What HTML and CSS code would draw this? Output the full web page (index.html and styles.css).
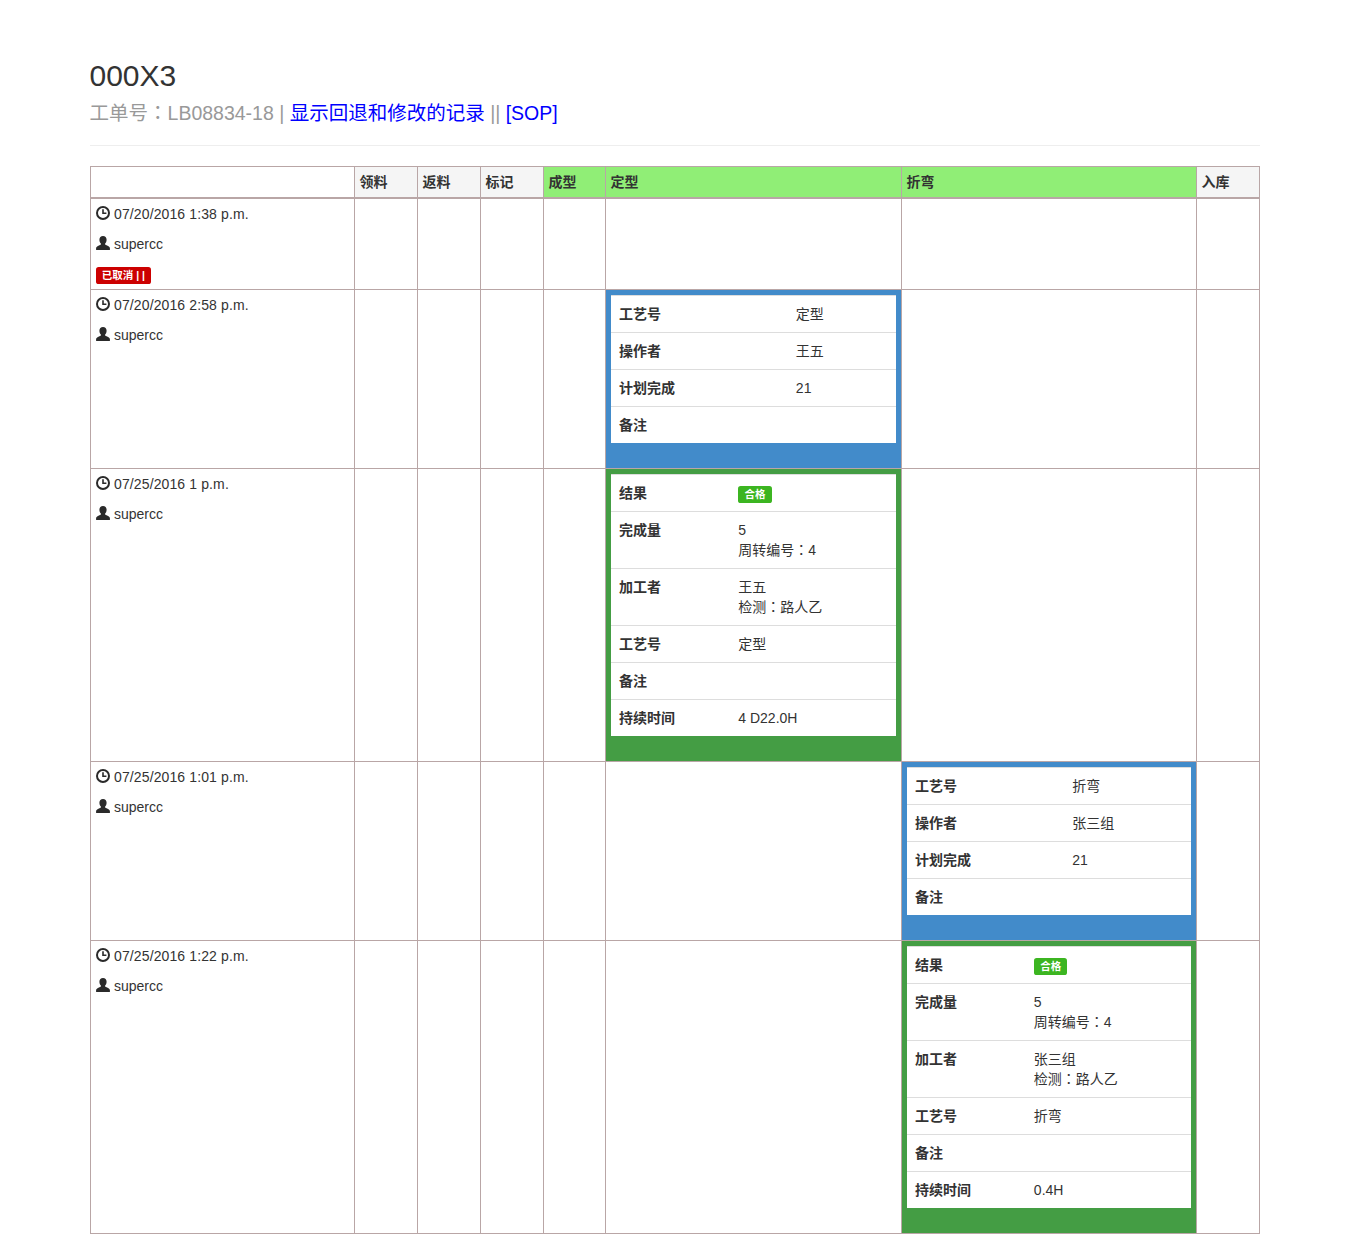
FILE: index.html
```html
<!DOCTYPE html>
<html lang="zh">
<head>
<meta charset="utf-8">
<title>000X3</title>
<link rel="stylesheet" href="styles.css">
</head>
<body>
<svg class="sprite" width="0" height="0" aria-hidden="true">
  <symbol id="clock" viewBox="0 0 14 14">
    <path fill-rule="evenodd" d="M7 0a7 7 0 1 1 0 14A7 7 0 0 1 7 0zm0 2a5 5 0 1 0 0 10A5 5 0 0 0 7 2z"/>
    <path d="M6.2 3.2h1.6v3.2h2.6v1.6H6.2z"/>
  </symbol>
  <symbol id="user" viewBox="0 0 14 14">
    <path d="M7 0c2.2 0 3.6 1.4 3.6 3.7 0 1.5-.6 3-1.4 3.8-.3.4-.2 1 .3 1.2l2.6 1.2c1 .5 1.7 1.2 1.8 2.1V14H.1v-1.9c.1-.9.8-1.6 1.8-2.1l2.6-1.2c.5-.2.6-.8.3-1.2-.8-.8-1.4-2.3-1.4-3.8C3.4 1.4 4.8 0 7 0z"/>
  </symbol>
</svg>
<main class="page">
  <div class="page-header">
    <h2>000X3<br><small>工单号<span class="colon" lang="zh-Hant">：</span>LB08834-18 | <a href="#">显示回退和修改的记录</a> || <a href="#">[SOP]</a></small></h2>
  </div>
  <table class="flow">
    <colgroup>
      <col class="c-info"><col class="c-a"><col class="c-a"><col class="c-a"><col class="c-b"><col class="c-c"><col class="c-d"><col class="c-a">
    </colgroup>
    <thead>
      <tr>
        <th class="blank"></th><th>领料</th><th>返料</th><th>标记</th>
        <th class="done">成型</th><th class="done">定型</th><th class="done">折弯</th><th>入库</th>
      </tr>
    </thead>
    <tbody>
      <tr>
        <td>
          <p class="when"><svg class="icon"><use href="#clock"/></svg> 07/20/2016 1:38 p.m.</p>
          <p><svg class="icon"><use href="#user"/></svg> supercc</p>
          <span class="label label-red">已取消 | |</span>
        </td>
        <td></td><td></td><td></td><td></td><td></td><td></td><td></td>
      </tr>
      <tr>
        <td>
          <p class="when"><svg class="icon"><use href="#clock"/></svg> 07/20/2016 2:58 p.m.</p>
          <p><svg class="icon"><use href="#user"/></svg> supercc</p>
        </td>
        <td></td><td></td><td></td><td></td>
        <td class="blue">
          <table class="detail">
            <tr><th>工艺号</th><td>定型</td></tr>
            <tr><th>操作者</th><td>王五</td></tr>
            <tr><th>计划完成</th><td>21</td></tr>
            <tr><th>备注</th><td></td></tr>
          </table>
        </td>
        <td></td><td></td>
      </tr>
      <tr>
        <td>
          <p class="when"><svg class="icon"><use href="#clock"/></svg> 07/25/2016 1 p.m.</p>
          <p><svg class="icon"><use href="#user"/></svg> supercc</p>
        </td>
        <td></td><td></td><td></td><td></td>
        <td class="green">
          <table class="detail">
            <tr><th>结果</th><td><span class="label label-green">合格</span></td></tr>
            <tr><th>完成量</th><td>5<br>周转编号<span class="colon" lang="zh-Hant">：</span>4</td></tr>
            <tr><th>加工者</th><td>王五<br>检测<span class="colon" lang="zh-Hant">：</span>路人乙</td></tr>
            <tr><th>工艺号</th><td>定型</td></tr>
            <tr><th>备注</th><td></td></tr>
            <tr><th>持续时间</th><td>4 D22.0H</td></tr>
          </table>
        </td>
        <td></td><td></td>
      </tr>
      <tr>
        <td>
          <p class="when"><svg class="icon"><use href="#clock"/></svg> 07/25/2016 1:01 p.m.</p>
          <p><svg class="icon"><use href="#user"/></svg> supercc</p>
        </td>
        <td></td><td></td><td></td><td></td><td></td>
        <td class="blue">
          <table class="detail">
            <tr><th>工艺号</th><td>折弯</td></tr>
            <tr><th>操作者</th><td>张三组</td></tr>
            <tr><th>计划完成</th><td>21</td></tr>
            <tr><th>备注</th><td></td></tr>
          </table>
        </td>
        <td></td>
      </tr>
      <tr>
        <td>
          <p class="when"><svg class="icon"><use href="#clock"/></svg> 07/25/2016 1:22 p.m.</p>
          <p><svg class="icon"><use href="#user"/></svg> supercc</p>
        </td>
        <td></td><td></td><td></td><td></td><td></td>
        <td class="green">
          <table class="detail">
            <tr><th>结果</th><td><span class="label label-green">合格</span></td></tr>
            <tr><th>完成量</th><td>5<br>周转编号<span class="colon" lang="zh-Hant">：</span>4</td></tr>
            <tr><th>加工者</th><td>张三组<br>检测<span class="colon" lang="zh-Hant">：</span>路人乙</td></tr>
            <tr><th>工艺号</th><td>折弯</td></tr>
            <tr><th>备注</th><td></td></tr>
            <tr><th>持续时间</th><td>0.4H</td></tr>
          </table>
        </td>
        <td></td>
      </tr>
    </tbody>
  </table>
</main>
</body>
</html>
```
FILE: styles.css
```css
* { box-sizing: border-box; }

body {
  margin: 0;
  background: #fff;
  color: #333;
  font-family: "Liberation Sans", "Noto Sans CJK SC", sans-serif;
  font-size: 14px;
  line-height: 20px;
}

.sprite { position: absolute; }

.page {
  width: 1170px;
  margin: 0 auto;
  padding-top: 40px;
}

.page-header {
  margin-bottom: 20px;
  padding-bottom: 9px;
  border-bottom: 1px solid #eee;
}

h2 {
  margin: 19px 0 11px;
  font-size: 30px;
  font-weight: 500;
  line-height: 33px;
}

small {
  font-size: 65%;
  font-weight: 400;
  line-height: 1;
  color: #999;
  vertical-align: -1px;
}

.colon { font-family: "Liberation Sans", "Noto Sans CJK TC", sans-serif; }

a { color: #00f; text-decoration: none; }

table { border-collapse: collapse; border-spacing: 0; }

.flow {
  width: 1170px;
  table-layout: fixed;
  margin-bottom: 20px;
}

.c-info { width: 264px; }
.c-a { width: 63px; }
.c-b { width: 62px; }
.c-c { width: 296px; }
.c-d { width: 295px; }

.flow > thead > tr > th,
.flow > tbody > tr > td {
  padding: 5px;
  border: 1px solid #b9a6a6;
  vertical-align: top;
  text-align: left;
}

.flow > thead > tr > th {
  border-bottom-width: 2px;
  background: #f5f5f5;
  color: #333;
}

.flow > thead > tr > th.blank { background: #fff; }
.flow > thead > tr > th.done { background: #90ee76; }

.flow > tbody > tr > td.blue { background: #428bca; }
.flow > tbody > tr > td.green { background: #449d44; }

p { margin: 0 0 10px; }

.when { letter-spacing: .12px; }

.icon {
  display: inline-block;
  width: 14px;
  height: 14px;
  margin-right: .5px;
  fill: #2a2a2a;
  vertical-align: -1px;
}

.label {
  display: inline;
  padding: .2em .6em .3em;
  border-radius: .25em;
  color: #fff;
  font-size: 75%;
  font-weight: 700;
  line-height: 1;
  vertical-align: baseline;
  white-space: nowrap;
}

.label-red { background: #c00; }
.label-green { background: #3cb521; }

.detail {
  width: 100%;
  margin-bottom: 20px;
  background: #fff;
}

.detail th,
.detail td {
  padding: 8px;
  border-top: 1px solid #ddd;
  vertical-align: top;
  text-align: left;
}

.detail th { padding-left: 8.5px; }
```
